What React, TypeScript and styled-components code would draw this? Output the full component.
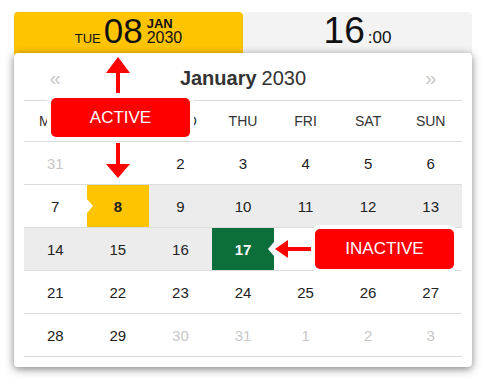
import styled, { createGlobalStyle } from "styled-components";

const Global = createGlobalStyle`
  body {
    margin: 0;
    background: #fff;
    font-family: "Liberation Sans", Arial, sans-serif;
  }
`;

// page wrapper, annotations are placed over it
const Page = styled.div`
  position: relative;
  width: 485px;
  height: 385px;
  padding: 12px 13px 0 14px;
  box-sizing: border-box;
`;

const Tabs = styled.div`
  display: flex;
  height: 47px;
`;

const Tab = styled.div<{ $active?: boolean }>`
  flex: 1;
  display: flex;
  justify-content: center;
  padding-top: 1px;
  background: ${(p) => (p.$active ? "#ffc400" : "#f3f3f3")};
  border-radius: 4px 4px 0 0;
  color: #111;
  white-space: nowrap;
`;

const Line = styled.div`
  line-height: 36px;
`;

const Small = styled.span`
  font-size: 13px;
  margin-right: 3px;
`;

const Big = styled.span<{ $size: number }>`
  font-size: ${(p) => p.$size}px;
`;

const Stack = styled.span`
  display: inline-block;
  margin-left: 4px;
  line-height: 14px;
  vertical-align: baseline;
`;

const Month = styled.span`
  display: block;
  font-size: 13px;
  font-weight: bold;
`;

const Year = styled.span`
  display: block;
  font-size: 16px;
`;

const Minutes = styled.span`
  font-size: 17px;
  margin-left: 3px;
`;

const Popup = styled.div`
  position: relative;
  z-index: 1;
  margin-top: -6px;
  background: #fff;
  border-radius: 4px;
  padding: 0 10px 10px;
  box-shadow: 0 2px 9px rgba(0, 0, 0, 0.5);
`;

const Grid = styled.div<{ $height: number }>`
  display: grid;
  grid-template-columns: repeat(7, 1fr);
  height: ${(p) => p.$height}px;
  border-bottom: 1px solid #dcdcdc;
`;

const Nav = styled.div`
  display: flex;
  align-items: center;
  justify-content: center;
  color: #c8c8c8;
  font-size: 20px;
  padding-top: 3px;
`;

const Title = styled.div`
  grid-column: span 5;
  display: flex;
  align-items: center;
  justify-content: center;
  font-size: 20px;
  color: #333;
  padding-top: 3px;

  b {
    margin-right: 5px;
  }
`;

const Weekday = styled.div`
  display: flex;
  align-items: center;
  justify-content: center;
  font-size: 14px;
  color: #333;
`;

type Kind = "muted" | "range" | "start" | "end" | undefined;

const Day = styled.div<{ $kind?: Kind }>`
  position: relative;
  display: flex;
  align-items: center;
  justify-content: center;
  font-size: 15px;
  color: ${(p) =>
    p.$kind === "muted" ? "#c8c8c8" : p.$kind === "end" ? "#fff" : "#222"};
  font-weight: ${(p) => (p.$kind === "start" || p.$kind === "end" ? "bold" : "normal")};
  background: ${(p) =>
    p.$kind === "range"
      ? "#ececec"
      : p.$kind === "start"
      ? "#ffc400"
      : p.$kind === "end"
      ? "#0b6e3b"
      : "transparent"};

  ${(p) =>
    p.$kind === "start" &&
    `&::before {
      content: "";
      position: absolute;
      left: 0;
      top: 50%;
      margin-top: -7px;
      border-top: 7px solid transparent;
      border-bottom: 7px solid transparent;
      border-left: 6px solid #fff;
    }`}

  ${(p) =>
    p.$kind === "end" &&
    `&::after {
      content: "";
      position: absolute;
      right: 0;
      top: 50%;
      margin-top: -7px;
      border-top: 7px solid transparent;
      border-bottom: 7px solid transparent;
      border-right: 6px solid #fff;
    }`}
`;

const Label = styled.div<{ $x: number; $y: number; $w: number; $h: number }>`
  position: absolute;
  z-index: 3;
  left: ${(p) => p.$x}px;
  top: ${(p) => p.$y}px;
  width: ${(p) => p.$w}px;
  height: ${(p) => p.$h}px;
  display: flex;
  align-items: center;
  justify-content: center;
  background: #ff0000;
  color: #fff;
  font-size: 17px;
  border-radius: 5px;
  box-shadow: 0 0 0 4px #fff;
`;

// arrow callout; the white backing hides the day under it
const Arrow = styled.svg<{ $x: number; $y: number; $backed?: boolean }>`
  position: absolute;
  z-index: 3;
  left: ${(p) => p.$x}px;
  top: ${(p) => p.$y}px;
  background: ${(p) => (p.$backed ? "#fff" : "transparent")};
`;

const weekdays = ["MON", "TUE", "WED", "THU", "FRI", "SAT", "SUN"];

const weeks: { d: number; k?: Kind }[][] = [
  [{ d: 31, k: "muted" }, { d: 1 }, { d: 2 }, { d: 3 }, { d: 4 }, { d: 5 }, { d: 6 }],
  [{ d: 7 }, { d: 8, k: "start" }, { d: 9, k: "range" }, { d: 10, k: "range" }, { d: 11, k: "range" }, { d: 12, k: "range" }, { d: 13, k: "range" }],
  [{ d: 14, k: "range" }, { d: 15, k: "range" }, { d: 16, k: "range" }, { d: 17, k: "end" }, { d: 18 }, { d: 19 }, { d: 20 }],
  [{ d: 21 }, { d: 22 }, { d: 23 }, { d: 24 }, { d: 25 }, { d: 26 }, { d: 27 }],
  [{ d: 28 }, { d: 29 }, { d: 30, k: "muted" }, { d: 31, k: "muted" }, { d: 1, k: "muted" }, { d: 2, k: "muted" }, { d: 3, k: "muted" }],
];

export default function App() {
  return (
    <>
      <Global />
      <Page>
        <Tabs>
          <Tab $active>
            <Line>
              <Small>TUE</Small>
              <Big $size={35}>08</Big>
              <Stack>
                <Month>JAN</Month>
                <Year>2030</Year>
              </Stack>
            </Line>
          </Tab>
          <Tab>
            <Line>
              <Big $size={37}>16</Big>
              <Minutes>:00</Minutes>
            </Line>
          </Tab>
        </Tabs>

        <Popup>
          <Grid $height={47}>
            <Nav>«</Nav>
            <Title>
              <b>January</b> 2030
            </Title>
            <Nav>»</Nav>
          </Grid>
          <Grid $height={40}>
            {weekdays.map((w) => (
              <Weekday key={w}>{w}</Weekday>
            ))}
          </Grid>
          {weeks.map((week, i) => (
            <Grid $height={42} key={i}>
              {week.map((c, j) => (
                <Day key={j} $kind={c.k}>
                  {c.d}
                </Day>
              ))}
            </Grid>
          ))}
        </Popup>

        {/* annotations */}
        <Arrow $x={106} $y={57} width="24" height="36" viewBox="0 0 24 36">
          <polygon points="12,0 24,16 14,16 14,36 10,36 10,16 0,16" fill="#ff0000" />
        </Arrow>
        <Label $x={51} $y={98} $w={139} $h={39}>ACTIVE</Label>
        <Arrow $backed $x={96} $y={143} width="44" height="35" viewBox="0 0 44 35">
          <polygon points="20,0 24,0 24,21 34,21 22,35 10,21 20,21" fill="#ff0000" />
        </Arrow>
        <Arrow $backed $x={274} $y={229} width="40" height="41" viewBox="0 0 40 41">
          <polygon points="1,20 14,11 14,18 37,18 37,22 14,22 14,29" fill="#ff0000" />
        </Arrow>
        <Label $x={315} $y={229} $w={139} $h={40}>INACTIVE</Label>
      </Page>
    </>
  );
}
